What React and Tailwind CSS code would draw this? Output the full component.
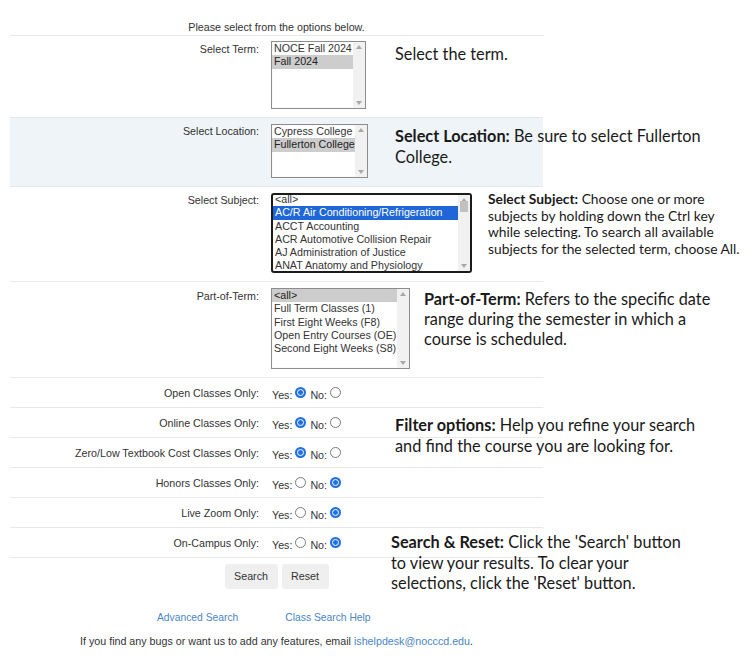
import React from 'react';

const formFont = { fontFamily: '"Liberation Sans", Arial, sans-serif' };
const noteFont = { fontFamily: 'Lato, "Noto Sans", sans-serif' };

function Arrow({ up }) {
  return (
    <svg width="6" height="4" viewBox="0 0 6 4">
      <path d={up ? 'M0 4 L3 0 L6 4 Z' : 'M0 0 L6 0 L3 4 Z'} fill="#a8a8a8" />
    </svg>
  );
}

function ListBox({ items, selected, focused, className, thumb }) {
  return (
    <div
      className={`flex bg-white overflow-hidden ${
        focused ? 'border-2 border-[#1b1b1b] rounded-[3px]' : 'border border-[#8d8d8d] shadow-[inset_0_0_1px_#ccc]'
      } ${className}`}
    >
      <div className={`flex-1 min-w-0 ${focused ? '-mt-[2px]' : ''}`}>
        {items.map((it, i) => (
          <div
            key={it}
            className={`h-[13.3px] leading-[13px] pl-[2px] text-[10.7px] whitespace-nowrap ${
              i === selected
                ? focused
                  ? 'bg-[#1f67d8] text-white'
                  : 'bg-[#cdcdcd] text-[#222]'
                : 'text-[#333]'
            }`}
          >
            {it}
          </div>
        ))}
      </div>
      <div className="w-[12px] bg-[#f1f1f1] flex flex-col items-center justify-between py-[3px]">
        <Arrow up />
        {thumb && <div className="w-[8px] h-[11px] bg-[#c1c1c1] -mt-[1px] mb-auto" />}
        <Arrow />
      </div>
    </div>
  );
}

function Radio({ checked }) {
  return checked ? (
    <span className="inline-flex w-[11px] h-[11px] rounded-full bg-[#1f6fe5] items-center justify-center">
      <span className="w-[7px] h-[7px] rounded-full bg-[#1f6fe5] border border-white" />
    </span>
  ) : (
    <span className="inline-block w-[11px] h-[11px] rounded-full border border-[#7a7a7a] bg-white" />
  );
}

function Row({ label, children, className = '', labelClass = '' }) {
  return (
    <div className={`grid grid-cols-[249px_1fr] gap-x-[12px] border-b border-[#e8e8e8] ${className}`}>
      <div className={`text-right text-[10.7px] leading-[14px] text-[#333] ${labelClass}`}>{label}</div>
      <div>{children}</div>
    </div>
  );
}

function RadioRow({ label, yes }) {
  return (
    <Row label={label} className="h-[30px] items-center">
      <div className="text-[10.7px] text-[#333] flex items-center gap-[3px] mt-[1px]">
        <span className="mt-[4px] ml-px">Yes:</span>
        <Radio checked={yes} />
        <span className="mt-[4px] ml-[1px]">No:</span>
        <Radio checked={!yes} />
      </div>
    </Row>
  );
}

const subjects = [
  '<all>',
  'AC/R Air Conditioning/Refrigeration',
  'ACCT Accounting',
  'ACR Automotive Collision Repair',
  'AJ Administration of Justice',
  'ANAT Anatomy and Physiology',
];

const parts = [
  '<all>',
  'Full Term Classes (1)',
  'First Eight Weeks (F8)',
  'Open Entry Courses (OE)',
  'Second Eight Weeks (S8)',
];

export default function App() {
  return (
    <div className="relative w-[753px] h-[669px] bg-white overflow-hidden">
      <div className="ml-[10px] w-[533px]" style={formFont}>
        <div className="pt-[20px] pb-px text-center text-[10.7px] leading-[14px] text-[#333] border-b border-[#e6e6e6]">
          Please select from the options below.
        </div>

        <Row label="Select Term:" className="pt-[5px] pb-[8px]" labelClass="pt-[1px]">
          <ListBox items={['NOCE Fall 2024', 'Fall 2024']} selected={1} className="w-[95px] h-[68px]" />
        </Row>

        <Row label="Select Location:" className="pt-[6px] pb-[8px] bg-[#eef4f7]" labelClass="pt-[0px]">
          <ListBox items={['Cypress College', 'Fullerton College']} selected={1} className="w-[97px] h-[54px]" />
        </Row>

        <Row label="Select Subject:" className="pt-[6px] pb-[8px]" labelClass="pt-0">
          <ListBox items={subjects} selected={1} focused thumb className="w-[201px] h-[80px]" />
        </Row>

        <Row label="Part-of-Term:" className="pt-[6px] pb-[8px]" labelClass="pt-[1px]">
          <ListBox items={parts} selected={0} className="w-[139px] h-[81px]" />
        </Row>

        <RadioRow label="Open Classes Only:" yes />
        <RadioRow label="Online Classes Only:" yes />
        <RadioRow label="Zero/Low Textbook Cost Classes Only:" yes />
        <RadioRow label="Honors Classes Only:" yes={false} />
        <RadioRow label="Live Zoom Only:" yes={false} />
        <RadioRow label="On-Campus Only:" yes={false} />

        <div className="flex justify-center gap-[4px] pt-[6px]">
          <button className="w-[53px] h-[25px] bg-[#efefef] rounded-[3px] text-[10.7px] text-[#333]">Search</button>
          <button className="w-[47px] h-[25px] bg-[#efefef] rounded-[3px] text-[10.7px] text-[#333]">Reset</button>
        </div>

        <div className="flex gap-[47px] pl-[147px] pt-[22px] text-[10.3px] leading-[14px] text-[#4a86c5]">
          <span>Advanced Search</span>
          <span>Class Search Help</span>
        </div>

        <div className="pt-[9px] text-center text-[10.7px] leading-[14px] text-[#333]">
          If you find any bugs or want us to add any features, email{' '}
          <span className="text-[#4a86c5]">ishelpdesk@nocccd.edu</span>.
        </div>
      </div>

      {/* Callouts laid over the form */}
      <div style={noteFont} className="text-[#1a1a1a] whitespace-nowrap">
        <p className="absolute left-[395px] top-[43px] text-[16.3px] leading-[21px]">Select the term.</p>
        <p className="absolute left-[395px] top-[125px] text-[16.3px] leading-[21px]">
          <b>Select Location:</b> Be sure to select Fullerton
          <br />
          College.
        </p>
        <p className="absolute left-[488px] top-[191px] text-[13.8px] leading-[16.7px]">
          <b>Select Subject:</b> Choose one or more
          <br />
          subjects by holding down the Ctrl key
          <br />
          while selecting. To search all available
          <br />
          subjects for the selected term, choose All.
        </p>
        <p className="absolute left-[424px] top-[289px] text-[16.3px] leading-[20px]">
          <b>Part-of-Term:</b> Refers to the specific date
          <br />
          range during the semester in which a
          <br />
          course is scheduled.
        </p>
        <p className="absolute left-[395px] top-[415px] text-[16.3px] leading-[20.5px]">
          <b>Filter options:</b> Help you refine your search
          <br />
          and find the course you are looking for.
        </p>
        <p className="absolute left-[391px] top-[532px] text-[16.3px] leading-[20.5px]">
          <b>Search &amp; Reset:</b> Click the 'Search' button
          <br />
          to view your results. To clear your
          <br />
          selections, click the 'Reset' button.
        </p>
      </div>
    </div>
  );
}
